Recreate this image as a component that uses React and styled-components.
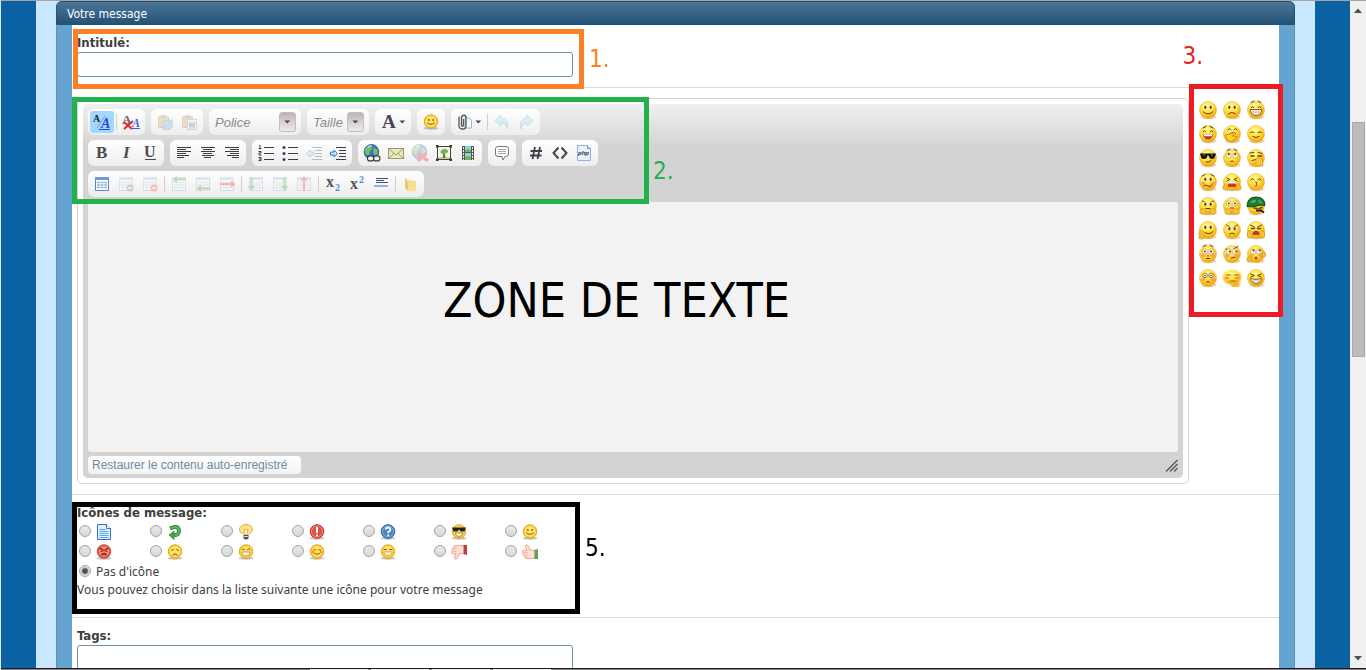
import React from "react";
import styled, { createGlobalStyle, css } from "styled-components";

const GlobalStyle = createGlobalStyle`
  * { box-sizing: border-box; }
  body { margin: 0; overflow: hidden; }
`;

const titleFont = `"DejaVu Sans Condensed", Tahoma, "DejaVu Sans", sans-serif`;
const uiFont = `"Noto Sans", Tahoma, sans-serif`;

const Screen = styled.div`
  display: flex;
  flex-direction: column;
  height: 100vh;
  border-top: 1px solid #a5a5a5;
  border-left: 1px solid #dfe9f2;
  font-family: ${uiFont};
  font-size: 12px;
  line-height: 16px;
  color: #3e3e3e;
`;
const Viewport = styled.div`
  flex: 1;
  min-height: 0;
  display: flex;
  overflow: hidden;
`;
const Page = styled.main`
  flex: 1;
  min-width: 0;
  padding: 0 35px;
  background: #0b62a3;
`;
const Gutter = styled.div`
  min-height: 100%;
  padding: 0 20px;
  background: #c9e8ff;
`;
const Panel = styled.form`
  border-radius: 6px 6px 0 0;
  background: #65a4d1;
`;
const PanelTitle = styled.h1`
  margin: 0;
  height: 24px;
  padding: 4px 10px;
  border: 1px solid #235273;
  border-radius: 6px 6px 0 0;
  background: linear-gradient(#4c7697, #235277);
  color: #fff;
  font-family: ${titleFont};
  font-size: 12px;
  font-weight: normal;
  line-height: 16px;
`;
const PanelBody = styled.div`
  padding: 0 15px;
  border: solid #6090b4;
  border-width: 0 1px;
`;
const Section = styled.section`
  position: relative;
  padding: ${(p) => p.$pad || "10px 5px"};
  border-bottom: 1px solid #cfdee9;
  background: #fff;
`;
const FieldLabel = styled.label`
  display: block;
  margin-bottom: 1px;
  font-family: ${titleFont};
  font-size: 13px;
  font-weight: bold;
  line-height: 16px;
`;
const GroupLabel = styled(FieldLabel).attrs({ as: "div" })``;
const TextInput = styled.input`
  display: block;
  width: 496px;
  max-width: 100%;
  height: 25px;
  padding: 2px 5px;
  border: 1px solid #6b91ab;
  border-radius: 3px;
  background: #fff;
`;

/* annotations lying over the form */
const Frame = styled.div`
  position: absolute;
  z-index: 2;
  top: ${(p) => p.$top}px;
  ${(p) => (p.$right !== undefined ? `right: ${p.$right}px;` : `left: ${p.$left}px;`)}
  width: ${(p) => p.$w}px;
  height: ${(p) => p.$h}px;
  border: 5px solid ${(p) => p.$color};
  pointer-events: none;
`;
const Mark = styled.span`
  position: absolute;
  z-index: 2;
  top: ${(p) => p.$top}px;
  ${(p) => (p.$right !== undefined ? `right: ${p.$right}px;` : `left: ${p.$left}px;`)}
  color: ${(p) => p.$color};
  font-family: ${titleFont};
  font-size: ${(p) => (p.$big ? 48 : 24)}px;
  line-height: ${(p) => (p.$big ? 58 : 30)}px;
  white-space: nowrap;
  pointer-events: none;
`;

/* editor */
const EditorRow = styled.div`
  display: flex;
  align-items: flex-start;
`;
const EditorFrame = styled.div`
  flex: 1;
  min-width: 0;
  padding: 5px;
  border: 1px solid #d3d3d3;
  border-radius: 5px;
`;
const Editor = styled.div`
  padding: 5px 5px 0;
  border-radius: 5px;
  background: linear-gradient(#f0f0f0, #d3d3d3 44px);
`;
const Tools = styled.div`
  display: flex;
  flex-direction: column;
  gap: 5px;
`;
const ToolRow = styled.div`
  display: flex;
  gap: 6px;
`;
const ToolGroup = styled.div`
  display: flex;
  align-items: center;
  height: 26px;
  padding: 2px;
  border-radius: 6px;
  background: linear-gradient(#ffffff, #ededed);
`;
const ToolButton = styled.button`
  display: flex;
  align-items: center;
  justify-content: center;
  gap: ${(p) => (p.$wide ? 2 : 0)}px;
  width: ${(p) => (p.$wide ? 32 : 24)}px;
  height: 22px;
  padding: 0;
  border: 0;
  border-radius: 3px;
  background: ${(p) => (p.$on ? "#a3d7ff" : "none")};
  svg { opacity: ${(p) => (p.$off ? 0.3 : 1)}; }
`;
const Divider = styled.span`
  width: 1px;
  height: 16px;
  margin: 0 2px;
  background: #d0d0d0;
`;
const Combo = styled.div`
  display: flex;
  align-items: center;
  width: ${(p) => p.$w}px;
  padding: 0 3px 0 4px;
`;
const ComboSelect = styled.select`
  flex: 1;
  min-width: 0;
  height: 20px;
  padding: 0;
  border: 0;
  appearance: none;
  background: none;
  color: #8b8b8b;
  font: italic 13px "Liberation Sans", Arial, sans-serif;
`;
const ComboArrow = styled.span`
  display: flex;
  align-items: center;
  justify-content: center;
  width: 17px;
  height: 20px;
  border: 1px solid #c4bcbc;
  border-radius: 3px;
  background: linear-gradient(#bdb5b5, #efebeb);
`;
const Area = styled.div`
  position: relative;
  margin-top: 5px;
`;
const TextZone = styled.textarea`
  display: block;
  width: 100%;
  height: 250px;
  padding: 8px;
  border: 0;
  border-radius: 3px;
  background: #f2f2f2;
  resize: none;
`;
const EditorFoot = styled.div`
  display: flex;
  align-items: center;
  justify-content: space-between;
  height: 26px;
`;
const RestoreButton = styled.button`
  min-width: 213px;
  height: 18px;
  padding: 0 4px;
  border: 0;
  border-radius: 4px;
  background: linear-gradient(#ffffff, #f3f3f3);
  color: #6c8ba3;
  font: 12px/18px "Liberation Sans", Arial, sans-serif;
  text-align: left;
`;
const Smileys = styled.div`
  display: grid;
  grid-template-columns: repeat(3, 24px);
  grid-auto-rows: 24px;
  width: 85px;
  padding-left: 7px;
`;
const SmileyButton = styled.button`
  display: flex;
  align-items: center;
  justify-content: center;
  padding: 0;
  border: 0;
  background: none;
`;

/* message icons */
const IconGrid = styled.div`
  display: grid;
  grid-template-columns: repeat(7, 71px);
  grid-auto-rows: 20px;
`;
const Choice = styled.label`
  display: flex;
  align-items: center;
  gap: 5px;
  height: 20px;
  padding-left: 2px;
`;
const Radio = styled.input`
  appearance: none;
  width: 12px;
  height: 12px;
  margin: 0 0 2px;
  border: 1px solid #a3a3a3;
  border-radius: 50%;
  background: linear-gradient(#e9e9e9, #d8d8d8);
  ${(p) =>
    p.defaultChecked &&
    css`
      background: radial-gradient(circle, #505050 2px, #e0e0e0 4px);
    `}
`;
const Hint = styled.p`
  margin: 0;
  line-height: 15px;
`;

/* browser chrome */
const ScrollTrack = styled.div`
  display: flex;
  flex-direction: column;
  align-items: center;
  width: 16px;
  padding: 7px 1px;
  background: #f0f0f0;
`;
const ScrollThumb = styled.div`
  width: 13px;
  height: 36%;
  margin-top: 109px;
  border: 1px solid #a8a8a8;
  background: #bcbcbc;
`;
const Spacer = styled.div`
  flex: 1;
`;
const BottomEdge = styled.div`
  display: flex;
  gap: 3px;
  height: 2px;
  padding-left: 309px;
  border-top: 1px solid #1d1a1c;
  background: #8a8486;
`;
const EdgeTab = styled.span`
  width: 58px;
  background: #f4f4f4;
`;

/* ---------- drawings ---------- */
const Svg = ({ s = 16, children, ...rest }) => (
  <svg width={s} height={s} viewBox="0 0 16 16" fill="none" aria-hidden="true" {...rest}>
    {children}
  </svg>
);
const Caret = () => (
  <svg width="7" height="5" viewBox="0 0 7 5" aria-hidden="true">
    <path d="M0.500 0.500h5.600L3.300 3.600z" fill="#444" />
  </svg>
);
const Letter = ({ x, y, size, fill, style, weight = "bold", children }) => (
  <text x={x} y={y} fontSize={size} fill={fill} fontStyle={style} fontWeight={weight} fontFamily="Liberation Serif, serif">
    {children}
  </text>
);
const Lines = ({ rows, color = "#3c3c44" }) => (
  <path d={rows.map(([x, y, w]) => `M${x} ${y}h${w}`).join("")} stroke={color} strokeWidth="1" />
);

const Source = () => (
  <svg width="20" height="20" viewBox="0 0 20 20" aria-hidden="true">
    <Letter x="1" y="10" size="10" fill="#222">A</Letter>
    <path d="M5 16L13 4" stroke="#8298ae" />
    <Letter x="9" y="16" size="14" fill="#1c4fe0" style="italic">A</Letter>
    <path d="M7 17.500h11" stroke="#1c4fe0" />
  </svg>
);
const RemoveFormat = () => (
  <svg width="20" height="20" viewBox="0 0 20 20" aria-hidden="true">
    <Letter x="1" y="12" size="13" fill="#666">A</Letter>
    <Letter x="11" y="15" size="12" fill="#3c64ea" style="italic">A</Letter>
    <path d="M10 16.500h9" stroke="#3c64ea" />
    <path d="M3 10l8 7M12 9l-9 8" stroke="#e3292e" strokeWidth="2" />
  </svg>
);
const ColorLetter = () => (
  <svg width="16" height="22" viewBox="0 0 16 22" aria-hidden="true">
    <Letter x="1" y="17" size="19" fill="#45454d">A</Letter>
  </svg>
);
const Clipboard = ({ word }) => (
  <Svg>
    <rect x="1.500" y="2.500" width="10" height="11" rx="1" fill="#dda043" stroke="#b97826" />
    <rect x="4" y="1" width="5" height="3" rx="1" fill="#888" />
    {word ? (
      <>
        <rect x="6.500" y="5.500" width="9" height="10" fill="#f4f6ff" stroke="#8994b0" />
        <path d="M8 8l1.500 5.500L11 9l1.500 4.500L14 8" stroke="#4a5f9e" strokeWidth="1.300" />
      </>
    ) : (
      <path d="M7 7l8-1v7l-2 2.500H6z" fill="#6cb5e3" stroke="#3d8fc2" />
    )}
  </Svg>
);
const Clip = () => (
  <Svg>
    <path d="M8 4h4l2.500 2.500V14H8z" fill="#f4fafd" stroke="#9db8c6" />
    <path d="M6.500 5v6.500c0 1-2 1-2 0V3.500c0-3 4.500-3 4.500 0V12c0 4-7 4-7 0V2.500" stroke="#555" strokeWidth="1.300" />
  </Svg>
);
const Undo = ({ flip }) => (
  <Svg>
    <path transform={flip ? "matrix(-1 0 0 1 16 0)" : undefined} d="M1 6.500L7 1v3c5 0 8 4 6 11-.5-4-2.500-6-6-6v3z" fill="#9ad4ef" stroke="#5ba9d0" />
  </Svg>
);
const TextIcon = ({ kind }) => (
  <svg width="16" height="20" viewBox="0 0 16 20" aria-hidden="true">
    {kind === "B" && <Letter x="2" y="15" size="17" fill="#4a4a52">B</Letter>}
    {kind === "I" && <Letter x="5" y="15" size="17" fill="#4a4a52" style="italic">I</Letter>}
    {kind === "U" && (
      <>
        <Letter x="2" y="14" size="16" fill="#4a4a52">U</Letter>
        <path d="M3 16.500h11" stroke="#4a4a52" />
      </>
    )}
  </svg>
);
const Align = ({ kind }) => {
  const widths = [14, 9, 14, 9, 12, 7];
  return (
    <Svg>
      <Lines
        rows={widths.map((w, i) => {
          const x = kind === "left" ? 1 : kind === "right" ? 15 - w : Math.floor((16 - w) / 2);
          return [x, i * 2 + 2.5, w];
        })}
      />
    </Svg>
  );
};
const List = ({ numbered }) => (
  <Svg>
    <Lines rows={[[6, 2.5, 10], [6, 8.5, 10], [6, 14.5, 10]]} />
    {numbered ? (
      <path d="M1 .5h1v3M.5 3.500h3M.5 6.500h2.500v1.500H1v2h2.500M.5 12.500h2.500v3H.5M1 14h2" stroke="#3c3c44" />
    ) : (
      <g fill="#42395c">
        <circle cx="2" cy="2.500" r="1.500" />
        <circle cx="2" cy="8.500" r="1.500" />
        <circle cx="2" cy="14.500" r="1.500" />
      </g>
    )}
  </Svg>
);
const Indent = ({ out }) => (
  <Svg>
    <Lines rows={[[6, 2.5, 10], [9, 5.5, 7], [9, 8.5, 7], [9, 11.5, 7], [6, 14.5, 10]]} />
    <path d={out ? "M.5 8.500L4 5v2h3.500v3H4v2z" : "M7.500 8.500L4 5v2H.5v3H4v2z"} fill="#bfe9fb" stroke="#1d86bd" />
  </Svg>
);
const Link = ({ broken }) => (
  <Svg s={18}>
    <circle cx="7.500" cy="7" r="6.500" fill="#3a72c4" stroke="#285492" strokeWidth=".8" />
    <path d="M3 3c3-3 5-1 5 1S5 6 6 8s-3 3-4 0-1-3 1-5M9 3l4 2v4l-3 1-1-3z" fill="#6cc266" />
    <path d="M4 3q2-2 4-1" stroke="#cfe6ff" />
    {broken ? (
      <path d="M6 8l9 7M14 8l-8 7" stroke="#e62020" strokeWidth="3" />
    ) : (
      <>
        <rect x="4" y="10.500" width="5.500" height="4.500" rx="2" fill="#eee" stroke="#3a3a3a" />
        <rect x="9.500" y="10.500" width="5.500" height="4.500" rx="2" fill="#eee" stroke="#3a3a3a" />
      </>
    )}
  </Svg>
);
const Mail = () => (
  <Svg>
    <path d="M.5 3.500h15v10H.5z" fill="#eceabf" stroke="#99986b" />
    <path d="M.5 3.500L8 10l7.500-6.500M.5 13.500L6 8.500M15.500 13.500L10 8.500" stroke="#99986b" />
  </Svg>
);
const Picture = () => (
  <Svg>
    <path d="M1.500 1.500h13v13h-13z" fill="#eef8e4" stroke="#444" />
    <path d="M2 12h12v2H2z" fill="#b7d98a" />
    <path d="M7.300 7h1.400l.8 6H6.800z" fill="#8a6540" />
    <path d="M4.500 7c0-3.500 6.500-4 7.500-1 .5 2.500-3 2-4 2.500S4.500 9 4.500 7z" fill="#79b350" />
    <path d="M0 0h2.500v2.500H0zM13.500 0H16v2.500h-2.500zM0 13.500h2.500V16H0zM13.500 13.500H16V16h-2.500z" fill="#333" />
  </Svg>
);
const Film = () => (
  <Svg>
    <path d="M2 1h12v14H2z" fill="#555" />
    <path d="M5 1h6v6H5zM5 8h6v7H5z" fill="#8fd0e6" />
    <path d="M5 5l3-1 3 1v2H5zM5 12l3-1 3 1v3H5z" fill="#74b450" />
    <path d="M3.500 2v13M12.500 2v13" stroke="#eee" strokeDasharray="2 1" />
  </Svg>
);
const Quote = () => (
  <Svg>
    <path d="M4 1.500h8q2.500 0 2.500 2.500v5q0 2.500-2.500 2.500h-1L9 15l-1-3.500H4Q1.500 11.500 1.500 9V4Q1.500 1.500 4 1.500z" fill="#fff" stroke="#777" />
    <path d="M4 4.500h8M4 6.500h8M4 8.500h8" stroke="#aaa" />
  </Svg>
);
const Hash = () => (
  <Svg>
    <path d="M7 2L4.500 14M12 2L9.500 14M2.500 6H14M2 10.500h11.500" stroke="#3f3f47" strokeWidth="1.800" />
  </Svg>
);
const Code = () => (
  <Svg>
    <path d="M6.500 2.500L1.500 8l5 5.500M9.500 2.500l5 5.500-5 5.500" stroke="#45454d" strokeWidth="2" />
  </Svg>
);
const Php = () => (
  <Svg>
    <path d="M1.500.5h10l3 3v12h-13z" fill="#e8f0fb" stroke="#92b2de" />
    <path d="M11.500.5v3h3" fill="#cfe0f6" stroke="#6f98d0" />
    <text x="2" y="10" fontSize="6" fontWeight="bold" fontStyle="italic" fill="#333" fontFamily="Liberation Sans, sans-serif">php</text>
  </Svg>
);
const Table = ({ faded, children }) => (
  <Svg>
    <g opacity={faded ? 0.7 : 1}>
      <path d="M1.500 1.500h13v13h-13z" fill="#fff" stroke="#5b86c5" />
      <path d="M1 1h14v3H1z" fill="#6f9ad8" />
      <path d="M3 6.500h10M3 9h10M3 11.500h10" stroke={faded ? "#9aa" : "#8db0d9"} strokeWidth="1.500" strokeDasharray="3 .6" />
    </g>
    {children}
  </Svg>
);
const Badge = ({ fill }) => (
  <>
    <circle cx="12" cy="12" r="3.500" fill={fill} />
    <path d="M10 12h4" stroke="#fff" strokeWidth="1.500" />
  </>
);
const Script = ({ up }) => (
  <svg width="16" height="20" viewBox="0 0 16 20" aria-hidden="true">
    <Letter x="1" y={up ? 15 : 13} size="16" fill="#55555d">x</Letter>
    <Letter x="10" y={up ? 9 : 17} size="10" fill="#5b8fdb">2</Letter>
  </svg>
);
const Rule = () => (
  <Svg>
    <path d="M3 2.500h12M3 4.500h8M3 6.500h12" stroke="#4c5060" />
    <path d="M1 9h14v2H1z" fill="#8db4e8" />
  </Svg>
);
const Folder = () => (
  <Svg>
    <path d="M3 2l3 2 8 1v10l-8 .5L3 12z" fill="#f9dc95" />
    <path d="M3 2l3 5v8l-3-3z" fill="#edc66c" />
  </Svg>
);

const brown = "#6b3a05";
const Eyes = ({ y = 6 }) => (
  <>
    <ellipse cx="6" cy={y} rx="1.900" ry="2.300" fill="#fffbe0" />
    <ellipse cx="12" cy={y} rx="1.900" ry="2.300" fill="#fffbe0" />
    <ellipse cx="6.300" cy={y + 0.3} rx="1.100" ry="1.700" fill={brown} />
    <ellipse cx="11.700" cy={y + 0.3} rx="1.100" ry="1.700" fill={brown} />
  </>
);
const RoundEyes = ({ dx = 0, dy = 0 }) => (
  <>
    <circle cx="5.800" cy="6.500" r="2.600" fill="#fff" stroke="#b0893a" strokeWidth=".6" />
    <circle cx="12.200" cy="6.500" r="2.600" fill="#fff" stroke="#b0893a" strokeWidth=".6" />
    <circle cx={5.8 + dx} cy={6.5 + dy} r="1.100" fill={brown} />
    <circle cx={12.2 + dx} cy={6.5 + dy} r="1.100" fill={brown} />
  </>
);
const Stroke = ({ d, c = brown, w = 1 }) => <path d={d} stroke={c} strokeWidth={w} fill="none" strokeLinecap="round" />;
const Cheeks = () => (
  <g fill="#ff8d6b" opacity=".75">
    <ellipse cx="4.300" cy="10.500" rx="2.300" ry="1.700" />
    <ellipse cx="13.700" cy="10.500" rx="2.300" ry="1.700" />
  </g>
);
const Hand = ({ x, y, w = 5, h = 4 }) => (
  <g>
    <rect x={x} y={y} width={w} height={h} rx="1.800" fill="#ffd94a" stroke="#d08a10" strokeWidth=".8" />
    <path d={`M${x + w / 3} ${y + 1}v${h - 2}M${x + (2 * w) / 3} ${y + 1}v${h - 2}`} stroke="#d08a10" strokeWidth=".6" />
  </g>
);
const happy = "M4 7q1.500-3 3 0M11 7q1.500-3 3 0";
const angry = "M3.500 4l4 2.200M14.500 4l-4 2.200";
const brows = "M4 1.500l3-1.500M14 1.500l-3-1.500";

const faces = [
  ["Sourire", <><Eyes /><Stroke d="M4.500 11q4.500 4 9 0" /></>],
  ["Triste", <><Eyes /><Stroke d="M5.500 13q3.500-3 7 0" /></>],
  ["Large sourire", <><Stroke d={brows} /><Stroke d="M4 6.500q1.500-2 3 0M11 6.500q1.500-2 3 0" /><path d="M3 8.500h12q-1 6-6 6t-6-6z" fill="#fff" stroke={brown} strokeWidth=".8" /><Stroke d="M3.500 11h11M6.500 9v5M9 9v5M11.500 9v5" w=".5" c="#b08d5a" /></>],
  ["Rire", <><Stroke d="M4 3l3-1.500M14 3l-3-1.500" /><Stroke d={happy} /><path d="M4 9.500h10q-1 5-5 5t-5-5z" fill="#b8402a" /><path d="M5 9.500h8v1.700H5z" fill="#fff" /></>],
  ["Oups", <><Stroke d="M5 5q1.500-3 3 0M11 5q1.500-3 3 0" /><Stroke d="M7 8.500q3-2 5 0" /><path d="M2 10l4-1 6-1.500 1 1.500-4 2 5 .5-3 3.500q-3 3-7 0z" fill="#ffd030" stroke="#c77b0c" strokeWidth=".8" /></>],
  ["Content", <><Stroke d="M3.500 7.500q2-1.500 3.500 0M11 7.500q2-1.500 3.500 0" /><Stroke d="M6 11.500q3 2.500 6 0" /></>],
  ["Cool", <><path d="M1 4.500h16l-1 3q-.5 2.500-3 2.500t-3.500-3.500h-1Q8 10 5 10T2 7.500z" fill="#111" /><path d="M4 6h2M12 6h2" stroke="#888" /><Stroke d="M7 13q3 1 5-1.500" /></>],
  ["Songeur", <><Stroke d={brows} /><RoundEyes dy={-1.2} /><Stroke d="M7.500 12.500q1.500-1.500 3 0" /></>],
  ["Sceptique", <><Stroke d="M3 4l4-.5M11 3.500l4 1" /><Stroke d="M4 7h3M11 7h3.500" w="1.600" /><Stroke d="M5 11.500l4-1" /><Hand x={9} y={9} w={6.5} h={8} /></>],
  ["Gêné", <><Stroke d="M3 3l3-1.500M15 3l-3-1.500" /><Eyes /><Cheeks /><Stroke d="M5 13q2-2 4 0t4-1" /></>],
  ["Mort de rire", <><Stroke d="M4 5l3 1.500L4 8M14 5l-3 1.500L14 8" /><path d="M5 9h8v5H5z" fill="#b8402a" /><path d="M5 9h8v1.500H5z" fill="#fff" /><Hand x={0} y={12} h={5} /><Hand x={13} y={12} h={5} /></>],
  ["Bisou", <><Stroke d={happy} /><Stroke d="M8.500 9q3 .5.500 2 2.500 1.500-.5 2.500" c="#b8410e" /></>],
  ["Fâché", <><Stroke d={angry} /><Eyes y={7} /><Stroke d="M7 11.500h4" /><Hand x={1} y={12} w={6} h={5} /><Hand x={11} y={12} w={6} h={5} /></>],
  ["Suppliant", <><RoundEyes /><Stroke d="M7.500 11h3" /><Hand x={2} y={12} w={6} h={5} /><Hand x={10} y={12} w={6} h={5} /></>],
  ["Soldat", <><Stroke d="M7 11l3 .5M12 11.500l3-1" w="1.500" /><path d="M0 9.500Q0 0 9 0t9 8.500q-4-1-8 .5T0 9.500z" fill="#1c7a35" stroke="#0d4a1d" /><path d="M3 6q2-4 5-3t-1 3zM11 3q4 0 4 4l-3-1z" fill="#53a85a" /><path d="M9 13.500h5l3 2" stroke="#222" strokeWidth="2" fill="none" /></>],
  ["Salut", <><Eyes /><Stroke d="M6 11.500q4 3 8-1" /><Hand x={0} y={10} w={5} h={8} /></>],
  ["Mécontent", <><Stroke d={angry} /><Eyes y={7.5} /><Stroke d="M6.500 13q2.500-2.500 5 0" /></>],
  ["Furieux", <><Stroke d={angry} /><Stroke d="M4.500 7.500h3M10.500 7.500h3" w="1.500" /><path d="M6 11q3-3 6 0v3H6z" fill="#b8402a" /><Hand x={0.5} y={10} w={5} h={7} /><Hand x={12.5} y={10} w={5} h={7} /></>],
  ["Surpris", <><Stroke d={brows} /><RoundEyes /><Cheeks /><Stroke d="M9 10v1.500M7.500 13.500h3" /></>],
  ["Méfiant", <><Stroke d="M3 4l4 1M11 3.500l4-2" /><RoundEyes dx={1} /><Cheeks /><Stroke d="M8 13q2-1.500 4-.5" /></>],
  ["Désespéré", <><RoundEyes dx={0.6} dy={-1} /><Cheeks /><circle cx="9" cy="13" r="1.500" fill="#b8402a" /><Hand x={0} y={12} h={5} /><Hand x={14} y={7} w={4.5} h={5} /></>],
  ["Étourdi", <><circle cx="6" cy="6.500" r="2.300" stroke={brown} fill="#fff" strokeWidth=".7" /><circle cx="12" cy="6.500" r="2.300" stroke={brown} fill="#fff" strokeWidth=".7" /><Stroke d="M5.500 6.500h1M11.500 6.500h1" /><Cheeks /><Stroke d="M7.500 13q1.500-1.500 3 0" /></>],
  ["Secoué", null],
  ["Ricanement", <><Stroke d="M3.500 5l4 1.500L4 8M14.500 5l-4 1.500L14 8" /><path d="M3.500 9.500q5.500 2 11 0-1 5-5.500 5t-5.500-5z" fill="#fff" stroke={brown} strokeWidth=".8" /><Stroke d="M4.500 12h9M7 10.500v4M11 10.500v4" w=".5" c="#b08d5a" /></>],
];

const Face = ({ size = 20, children, blurred }) => (
  <svg width={size} height={size} viewBox="-1 -1 20 20" aria-hidden="true">
    <defs>
      <radialGradient id="faceYellow" cx=".42" cy=".28" r=".75">
        <stop offset="0" stopColor="#fffa9c" />
        <stop offset=".5" stopColor="#ffe03a" />
        <stop offset="1" stopColor="#ee9c08" />
      </radialGradient>
      <filter id="shake" x="-20%" y="-20%" width="140%" height="140%">
        <feGaussianBlur stdDeviation="1.300 .6" />
      </filter>
    </defs>
    {blurred ? (
      <g filter="url(#shake)">
        <ellipse cx="9" cy="8" rx="9.500" ry="7.500" fill="url(#faceYellow)" />
        <path d="M6 13h11l-1 5H9z" fill="#f5b32a" />
        <path d="M3 6h5M11 6h5M7 12h6" stroke="#9a5a12" strokeWidth="1.200" />
        <path d="M2 9h4M12 9h4" stroke="#ff7a60" strokeWidth="2" />
      </g>
    ) : (
      <>
        <ellipse cx="9.800" cy="16" rx="7.500" ry="2.300" fill="#b98b45" opacity=".35" />
        <circle cx="9" cy="9" r="8.500" fill="url(#faceYellow)" stroke="#e3a528" strokeWidth=".5" />
        {children}
      </>
    )}
  </svg>
);

const CoinFace = ({ red, children }) => (
  <svg width="16" height="16" viewBox="0 0 16 16" aria-hidden="true">
    <ellipse cx="8" cy="14.300" rx="7.500" ry="1.500" fill="#9a9a9a" opacity=".6" />
    <circle cx="8" cy="7.500" r="6.700" fill={red ? "#ee6455" : "#fbd23c"} stroke={red ? "#c23b2e" : "#e0a31a"} />
    <circle cx="8" cy="7.500" r="5" fill={red ? "#f5806f" : "#ffe36a"} />
    {children}
  </svg>
);
const SmileCoin = () => (
  <CoinFace>
    <circle cx="5.800" cy="6" r=".9" fill="#8a5a08" />
    <circle cx="10.200" cy="6" r=".9" fill="#8a5a08" />
    <Stroke d="M4.500 9q3.500 3 7 0" c="#8a5a08" />
  </CoinFace>
);
const Round = ({ fill, edge, children }) => (
  <Svg>
    <ellipse cx="8" cy="14.300" rx="7.500" ry="1.500" fill="#9a9a9a" opacity=".6" />
    <circle cx="8" cy="7.500" r="6.800" fill={fill} stroke={edge} />
    <circle cx="8" cy="7.500" r="5.500" stroke="#fff" strokeOpacity=".45" strokeWidth=".8" />
    {children}
  </Svg>
);
const Thumb = ({ up }) => (
  <Svg>
    <g transform={up ? undefined : "matrix(1 0 0 -1 0 16)"}>
      <path d="M12 6l4-1v10h-4z" fill={up ? "#4fae50" : "#b8433c"} />
      <path
        d="M12.500 6.500L8 6Q7.500 2 5 .8 3 .8 3.500 3l1.500 3.500-3-.5Q0 6.500.8 8.300 0 9.500 1.300 10.600 1 12 2.500 12.800 3 14.600 5 14.600l7.500-.4z"
        fill="#ffe0d4"
        stroke="#e8957e"
        strokeWidth=".8"
      />
      <path d="M1.500 8.500h4M2 10.700h3.500M3 12.800h3" stroke="#eba18c" strokeWidth=".7" />
    </g>
  </Svg>
);

const messageIcons = [
  ["Document", <Svg><path d="M1.500.5h9l4 4v11h-13z" fill="#e4f2ff" stroke="#2e73c7" /><path d="M10.500.5v4h4" fill="#fff" stroke="#2e73c7" /><path d="M3.500 5.500h6M3.500 7.500h9M3.500 9.500h9M3.500 11.500h9M3.500 13.500h9" stroke="#55a4ec" /></Svg>],
  ["Réponse", <Svg><path d="M3 4.500q8-4 9 2 .5 5-6 4.500" stroke="#257a32" strokeWidth="4" /><path d="M3 4.500q8-4 9 2 .5 5-6 4.500" stroke="#55b661" strokeWidth="2.500" /><path d="M7 7l-5 4 5 4.500z" fill="#46a553" stroke="#257a32" strokeWidth=".7" /></Svg>],
  ["Idée", <Svg><ellipse cx="8" cy="5.500" rx="6.500" ry="5" fill="#ffe58b" stroke="#eba53a" /><path d="M5 8h6l-1 4H6z" fill="#ffe58b" /><path d="M6 5l2 1 2-1-1 6H7z" fill="#fffbe5" stroke="#d89b2c" strokeWidth=".7" /><path d="M5.500 11h5v3.500l-1.500 1H7l-1.500-1z" fill="#4c555e" /><path d="M6 12.500h4" stroke="#d5d5d5" /></Svg>],
  ["Important", <Round fill="#df4f43" edge="#b63b31"><path d="M8 3v6M8 10.500v1.800" stroke="#fff" strokeWidth="2" /></Round>],
  ["Question", <Round fill="#4483c4" edge="#2e5f9a"><path d="M5.500 5.500q.5-2 2.500-2t2.500 2q0 1.300-2.300 2.500v1.200M8.200 10.500v1.800" stroke="#fff" strokeWidth="1.800" /></Round>],
  ["Cool", <CoinFace><path d="M1 3.500h14l-1.500 4h-4L8 5.500 6.500 7.500h-4z" fill="#222" /><path d="M4 9h8q-1 3.500-4 3.500T4 9z" fill="#fff" stroke="#8a5a08" strokeWidth=".7" /></CoinFace>],
  ["Sourire", <SmileCoin />],
  ["En colère", <CoinFace red><path d="M3.500 4l4 2.500M12.500 4l-4 2.500M5 7.500h1.500M9.500 7.500H11M5.500 11q2.500-2.500 5 0" stroke="#7d1c14" strokeWidth="1.200" fill="none" /></CoinFace>],
  ["Triste", <CoinFace><Stroke d="M4.500 6.500L6.500 5.500M11.500 6.500l-2-1M5.500 11q2.500-2.500 5 0" c="#8a5a08" /></CoinFace>],
  ["Rire", <CoinFace><Stroke d="M4 5.500q1.200-1.500 2.400 0M9.500 5.500q1.200-1.500 2.400 0" c="#8a5a08" /><path d="M3.800 8h8.400q-.8 4-4.200 4T3.800 8z" fill="#fff" stroke="#b97d10" strokeWidth=".7" /></CoinFace>],
  ["Gêné", <CoinFace><g fill="#f98c50"><circle cx="4" cy="8" r="1.500" /><circle cx="12" cy="8" r="1.500" /></g><Stroke d="M4.500 6q1.200-1.500 2.400 0M9.300 6q1.200-1.500 2.400 0M5.500 9.500q2.500 2 5 0" c="#8a5a08" /></CoinFace>],
  ["Content", <CoinFace><Stroke d="M4 5.500h2.500M9.500 5.500H12" c="#8a5a08" /><path d="M3.500 8h9q-.8 3.500-4.500 3.500T3.500 8z" fill="#fff" stroke="#b97d10" strokeWidth=".7" /></CoinFace>],
  ["Pouce en bas", <Thumb />],
  ["Pouce en haut", <Thumb up />],
];

const Tool = ({ label, icon, ...rest }) => (
  <ToolButton type="button" aria-label={label} {...rest}>
    {icon}
  </ToolButton>
);
const Dropdown = ({ label, width }) => (
  <Combo $w={width}>
    <ComboSelect aria-label={label} defaultValue={label}>
      <option>{label}</option>
    </ComboSelect>
    <ComboArrow>
      <Caret />
    </ComboArrow>
  </Combo>
);

const orange = "#ff7f27";
const green = "#22b14c";
const red = "#ed1c24";

function Toolbar() {
  return (
    <Tools>
      <ToolRow>
        <ToolGroup>
          <Tool label="Mode source" icon={<Source />} $on />
          <Divider />
          <Tool label="Supprimer la mise en forme" icon={<RemoveFormat />} />
        </ToolGroup>
        <ToolGroup>
          <Tool label="Coller" icon={<Clipboard />} $off />
          <Tool label="Coller depuis Word" icon={<Clipboard word />} $off />
        </ToolGroup>
        <ToolGroup>
          <Dropdown label="Police" width={88} />
        </ToolGroup>
        <ToolGroup>
          <Dropdown label="Taille" width={58} />
        </ToolGroup>
        <ToolGroup>
          <Tool label="Couleur" $wide icon={<><ColorLetter /><Caret /></>} />
        </ToolGroup>
        <ToolGroup>
          <Tool label="Smileys" icon={<SmileCoin />} />
        </ToolGroup>
        <ToolGroup>
          <Tool label="Pièces jointes" $wide icon={<><Clip /><Caret /></>} />
          <Divider />
          <Tool label="Annuler" icon={<Undo />} $off />
          <Tool label="Rétablir" icon={<Undo flip />} $off />
        </ToolGroup>
      </ToolRow>
      <ToolRow>
        <ToolGroup>
          <Tool label="Gras" icon={<TextIcon kind="B" />} />
          <Tool label="Italique" icon={<TextIcon kind="I" />} />
          <Tool label="Souligné" icon={<TextIcon kind="U" />} />
        </ToolGroup>
        <ToolGroup>
          <Tool label="Aligner à gauche" icon={<Align kind="left" />} />
          <Tool label="Centrer" icon={<Align kind="center" />} />
          <Tool label="Aligner à droite" icon={<Align kind="right" />} />
        </ToolGroup>
        <ToolGroup>
          <Tool label="Liste numérotée" icon={<List numbered />} />
          <Tool label="Liste à puces" icon={<List />} />
          <Tool label="Diminuer le retrait" icon={<Indent out />} $off />
          <Tool label="Augmenter le retrait" icon={<Indent />} />
        </ToolGroup>
        <ToolGroup>
          <Tool label="Lien" icon={<Link />} />
          <Tool label="E-mail" icon={<Mail />} />
          <Tool label="Supprimer le lien" icon={<Link broken />} $off />
          <Tool label="Image" icon={<Picture />} />
          <Tool label="Vidéo" icon={<Film />} />
        </ToolGroup>
        <ToolGroup>
          <Tool label="Citation" icon={<Quote />} />
        </ToolGroup>
        <ToolGroup>
          <Tool label="Code" icon={<Hash />} />
          <Tool label="HTML" icon={<Code />} />
          <Tool label="PHP" icon={<Php />} />
        </ToolGroup>
      </ToolRow>
      <ToolRow>
        <ToolGroup>
          <Tool label="Tableau" icon={<Table />} />
          <Tool label="Propriétés du tableau" $off icon={<Table faded><Badge fill="#777" /></Table>} />
          <Tool label="Supprimer le tableau" $off icon={<Table faded><Badge fill="#e2571b" /></Table>} />
          <Divider />
          <Tool label="Ligne avant" $off icon={<Table faded><path d="M15 3.500H5M6 1L3 3.500 6 6" stroke="#3d9a35" strokeWidth="2" /></Table>} />
          <Tool label="Ligne après" $off icon={<Table faded><path d="M15 12.500H5M6 10l-3 2.500L6 15" stroke="#3d9a35" strokeWidth="2" /></Table>} />
          <Tool label="Supprimer la ligne" $off icon={<Table faded><path d="M1 8h14M12 5.500L15 8l-3 2.500" stroke="#e22" strokeWidth="2" /></Table>} />
          <Divider />
          <Tool label="Colonne avant" $off icon={<Table faded><path d="M3.500 1v10M1 10l2.500 3L6 10" stroke="#3d9a35" strokeWidth="2" /></Table>} />
          <Tool label="Colonne après" $off icon={<Table faded><path d="M12.500 1v10M10 10l2.500 3 2.500-3" stroke="#3d9a35" strokeWidth="2" /></Table>} />
          <Tool label="Supprimer la colonne" $off icon={<Table faded><path d="M8 15V2M5.500 4.500L8 2l2.500 2.500" stroke="#e22" strokeWidth="2" /></Table>} />
          <Divider />
          <Tool label="Indice" icon={<Script />} />
          <Tool label="Exposant" icon={<Script up />} />
          <Tool label="Ligne horizontale" icon={<Rule />} />
          <Divider />
          <Tool label="Spoiler" icon={<Folder />} />
        </ToolGroup>
      </ToolRow>
    </Tools>
  );
}

export default function App() {
  return (
    <Screen>
      <GlobalStyle />
      <Viewport>
        <Page>
          <Gutter>
            <Panel>
              <PanelTitle>Votre message</PanelTitle>
              <PanelBody>
                <Section>
                  <FieldLabel htmlFor="title">Intitulé:</FieldLabel>
                  <TextInput id="title" type="text" />
                  <Frame $top={4} $left={1} $w={511} $h={60} $color={orange} />
                  <Mark $top={19} $left={517} $color={orange}>1.</Mark>
                  <Mark $top={16} $right={76} $color={red}>3.</Mark>
                </Section>

                <Section>
                  <EditorRow>
                    <EditorFrame>
                      <Editor>
                        <Toolbar />
                        <Area>
                          <TextZone aria-label="Message" />
                          <Mark $big $top={69} $left={355} $color="#000">ZONE DE TEXTE</Mark>
                        </Area>
                        <EditorFoot>
                          <RestoreButton type="button">Restaurer le contenu auto-enregistré</RestoreButton>
                          <svg width="13" height="13" viewBox="0 0 13 13" aria-hidden="true">
                            <path d="M1 12.500L12.500 1M5 12.500L12.500 5M9 12.500L12.500 9" stroke="#555" strokeWidth="1.300" />
                          </svg>
                        </EditorFoot>
                      </Editor>
                    </EditorFrame>
                    <Smileys>
                      {faces.map(([name, art]) => (
                        <SmileyButton key={name} type="button" aria-label={name}>
                          <Face blurred={!art}>{art}</Face>
                        </SmileyButton>
                      ))}
                    </Smileys>
                  </EditorRow>
                  <Frame $top={9} $left={0} $w={577} $h={107} $color={green} />
                  <Mark $top={68} $left={581} $color={green}>2.</Mark>
                  <Frame $top={-4} $right={-4} $w={94} $h={233} $color={red} />
                </Section>

                <Section $pad="10px 5px 20px">
                  <GroupLabel>Icônes de message:</GroupLabel>
                  <IconGrid role="radiogroup" aria-label="Icônes de message">
                    {messageIcons.map(([name, art]) => (
                      <Choice key={name}>
                        <Radio type="radio" name="icon" aria-label={name} />
                        {art}
                      </Choice>
                    ))}
                  </IconGrid>
                  <Choice>
                    <Radio type="radio" name="icon" defaultChecked />
                    Pas d'icône
                  </Choice>
                  <Hint>Vous pouvez choisir dans la liste suivante une icône pour votre message</Hint>
                  <Frame $top={7} $left={0} $w={508} $h={112} $color="#000" />
                  <Mark $top={38} $left={513} $color="#000">5.</Mark>
                </Section>

                <Section>
                  <FieldLabel htmlFor="tags">Tags:</FieldLabel>
                  <TextInput id="tags" type="text" />
                </Section>
              </PanelBody>
            </Panel>
          </Gutter>
        </Page>
        <ScrollTrack>
          <svg width="8" height="5" viewBox="0 0 8 5" aria-hidden="true">
            <path d="M0 5L4 0.500 8 5z" fill="#505050" />
          </svg>
          <ScrollThumb />
          <Spacer />
          <svg width="8" height="5" viewBox="0 0 8 5" aria-hidden="true">
            <path d="M0 0L4 4.500 8 0z" fill="#505050" />
          </svg>
        </ScrollTrack>
      </Viewport>
      <BottomEdge>
        <EdgeTab />
        <EdgeTab />
        <EdgeTab />
        <EdgeTab />
      </BottomEdge>
    </Screen>
  );
}
